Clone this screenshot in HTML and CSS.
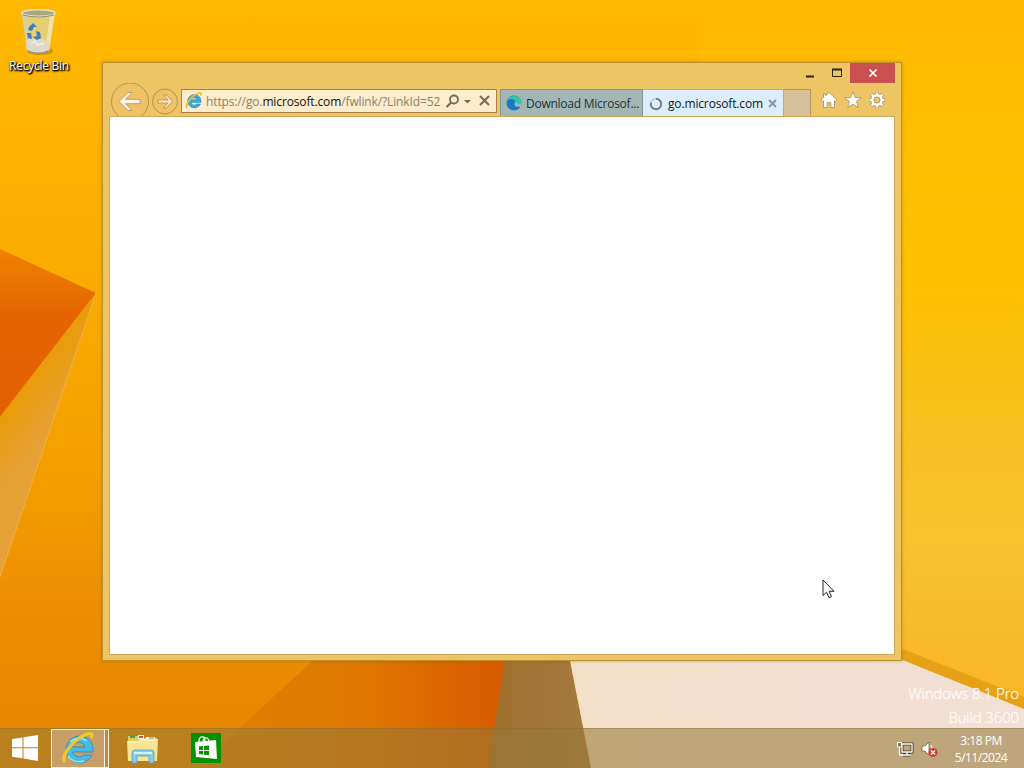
FILE: index.html
```html
<!DOCTYPE html>
<html lang="en">
<head>
  <meta charset="UTF-8">
  <meta name="viewport" content="width=device-width, initial-scale=1.0">
  <title>Desktop</title>
  <link rel="stylesheet" href="styles.css">
</head>
<body>
  <div class="desktop">
    <svg class="wallpaper" viewBox="0 0 1024 768" preserveAspectRatio="none">
      <defs>
        <linearGradient id="sky" x1="0" y1="0" x2="0" y2="1">
          <stop offset="0" stop-color="#ffb900"/>
          <stop offset=".38" stop-color="#fbab00"/>
          <stop offset=".6" stop-color="#f5a000"/>
          <stop offset=".8" stop-color="#ec8d00"/>
          <stop offset="1" stop-color="#e88600"/>
        </linearGradient>
        <linearGradient id="right" x1="0" y1="0" x2="0" y2="1">
          <stop offset="0" stop-color="#ffb900"/>
          <stop offset=".4" stop-color="#fcc100"/>
          <stop offset=".6" stop-color="#fac022"/>
          <stop offset=".75" stop-color="#fac22f"/>
          <stop offset="1" stop-color="#f7b424"/>
        </linearGradient>
        <linearGradient id="red" x1="0" y1="0" x2="0" y2="1">
          <stop offset="0" stop-color="#ef8200"/>
          <stop offset=".4" stop-color="#e56300"/>
          <stop offset="1" stop-color="#e26000"/>
        </linearGradient>
        <linearGradient id="blade" gradientUnits="userSpaceOnUse" x1="10" y1="390" x2="55" y2="425">
          <stop offset="0" stop-color="#ea9a00"/>
          <stop offset="1" stop-color="#e6a238"/>
        </linearGradient>
        <linearGradient id="fold" x1="0" y1="0" x2="1" y2="0">
          <stop offset="0" stop-color="#de8300"/>
          <stop offset=".55" stop-color="#df7600"/>
          <stop offset="1" stop-color="#d75a00"/>
        </linearGradient>
        <linearGradient id="brown" x1="0" y1="0" x2="1" y2="0">
          <stop offset="0" stop-color="#a06f2b"/>
          <stop offset="1" stop-color="#a57b42"/>
        </linearGradient>
        <linearGradient id="cream" x1="0" y1="0" x2="1" y2="0">
          <stop offset="0" stop-color="#f2e0c8"/>
          <stop offset="1" stop-color="#f2dfd6"/>
        </linearGradient>
      </defs>
      <rect width="1024" height="768" fill="url(#sky)"/>
      <rect x="700" width="324" height="720" fill="url(#right)"/>
      <path d="M0 249 96 293 0 417z" fill="url(#red)"/>
      <path d="M96 293 0 417V577z" fill="url(#blade)"/>
      <path d="M96 293 0 577" stroke="#eeb04a" stroke-width="1"/>
      <path d="M335 640H510L492 768H198L240 728z" fill="url(#fold)"/>
      <path d="M508 640H566L591 768H488z" fill="url(#brown)"/>
      <path d="M566 640H880L1024 709V768H591z" fill="url(#cream)"/>
      <path d="M890 644 1024 697V709L900 659z" fill="#e6a116"/>
    </svg>

    <div class="shortcut">
      <svg width="40" height="48" viewBox="0 0 40 48">
        <ellipse cx="21" cy="43" rx="13" ry="4" fill="#9c7100" opacity=".5"/>
        <path d="M3 5 8 43Q19 48 30 43L36 5z" fill="#e4d27d" opacity=".9"/>
        <path d="M3 5 8 43 11 44 8 7z" fill="#d1ceb2"/>
        <path d="M36 5 30 43 26 44 31 7z" fill="#eee2a9"/>
        <path d="M7 33Q12 28 17 32L24 31 31 35 30 43Q19 48 8 43z" fill="#ded9c9"/>
        <path d="M12 36 16 33 19 37 25 35" fill="none" stroke="#f1eee2" stroke-width="1.500"/>
        <path d="M8 42Q19 47 30 42L29 44Q19 48 9 44z" fill="#90928e"/>
        <ellipse cx="19.500" cy="5" rx="16.500" ry="3.300" fill="#aaa780" stroke="#e4e1d0" stroke-width="1.500"/>
        <path d="M4 7Q19 11 35 7" fill="none" stroke="#8f916c"/>
        <path d="M10 19 14 15 18 19 15 19 13 23 9 22zM17 23 21 24 22 30 18 32 14 29 18 28zM8 25 12 25 13 31 9 30z" fill="#3d7cc4"/>
      </svg>
      <span class="shortcut-label">Recycle Bin</span>
    </div>

    <div class="watermark">
      <div class="edition">Windows 8.1 Pro</div>
      <div class="build">Build 3600</div>
    </div>

    <div class="window">
      <div class="titlebar">
        <button class="caption"><svg width="10" height="12"><path d="M1 9.500H9" stroke="#2e220c" stroke-width="2"/></svg></button>
        <button class="caption"><svg width="12" height="12"><path d="M1.500 2.500H10.500V9.500H1.500z" fill="none" stroke="#2e220c"/><path d="M1 2.500H11" stroke="#2e220c" stroke-width="2"/></svg></button>
        <button class="caption close"><svg width="10" height="10"><path d="M1.500 1.500 8.500 8.500M8.500 1.500 1.500 8.500" stroke="#fff" stroke-width="1.700"/></svg></button>
      </div>
      <div class="toolbar">
        <div class="nav">
          <svg width="72" height="35" viewBox="0 0 72 35">
            <circle cx="20" cy="18.500" r="18.500" fill="#efc268" stroke="#b99148"/>
            <path d="M9 18.500 18 9.500H22L15.500 16.300H30V20.700H15.500L22 27.500H18z" fill="#fff6e5" stroke="#b58850" stroke-width=".8"/>
            <circle cx="55" cy="18.500" r="12.500" fill="#efc268" stroke="#b99148"/>
            <path d="M62.500 18.500 56.500 12H53.500L58 17H48V20H58L53.500 25H56.500z" fill="#fbe6bd" stroke="#b58850" stroke-width=".8"/>
          </svg>
        </div>
        <div class="address">
          <svg class="ie-small" width="18" height="18" viewBox="0 0 36 36">
            <path d="M18 5A13.500 13.500 0 1 0 31 24H23A6.500 6.500 0 0 1 12 21H32C33 11 27 5 18 5zM12 15.500A6.500 6.500 0 0 1 24 15.500z" fill="#3fa5dc" fill-rule="evenodd" stroke="#2788bd"/>
            <path d="M4 32C-1 25 16 5 28 2Q34 1 31 7" fill="none" stroke="#e3c02e" stroke-width="3.500"/>
          </svg>
          <span class="url">https://go.<b>microsoft.com</b>/fwlink/?LinkId=52</span>
          <svg class="address-icons" width="48" height="18" viewBox="0 0 48 18">
            <circle cx="10" cy="7.500" r="4" fill="none" stroke="#776a54" stroke-width="1.800"/>
            <path d="M7.200 10.500 2.500 15" stroke="#776a54" stroke-width="2.200"/>
            <path d="M20 8H27L23.500 11.500z" fill="#776a54"/>
            <path d="M36 4 45 13M45 4 36 13" stroke="#776a54" stroke-width="2"/>
          </svg>
        </div>
        <div class="tabs">
          <div class="tab">
            <svg width="16" height="16" viewBox="0 0 16 16">
              <circle cx="8" cy="8" r="7.500" fill="#1b78c8"/>
              <path d="M1 6C3 0 12-1 15 5 16 9 13 11 10 9.500 11 5 5 3 1 6z" fill="#35c6a6"/>
              <path d="M1 6C5 2 10 5 8 8 6 12 11 13 14 12 9 18 0 14 1 6z" fill="#147bc9"/>
              <path d="M9.500 6.500Q7 10 10 11.500L16 12V8Q12 10 9.500 6.500z" fill="#a2b7b4"/>
            </svg>
            <span>Download Microsof...</span>
          </div>
          <div class="tab active">
            <svg width="14" height="14" viewBox="0 0 14 14"><path d="M7 1.800A5.200 5.200 0 1 1 2 5.500" fill="none" stroke="#727e88" stroke-width="2"/><path d="M2 5.500A5.200 5.200 0 0 1 7 1.800" fill="none" stroke="#c2d2dc" stroke-width="2"/></svg>
            <span>go.microsoft.com</span>
            <svg class="tab-close" width="9" height="9"><path d="M1 1 8 8M8 1 1 8" stroke="#8296a2" stroke-width="1.800"/></svg>
          </div>
          <div class="new-tab"></div>
        </div>
        <div class="tools">
          <svg width="18" height="18" viewBox="0 0 18 18"><path d="M9 1.500 17 9 15.500 10.500 14.500 9.600V16.500H10.800V11.500H7.200V16.500H3.500V9.600L2.500 10.500 1 9 3.500 6.700V3H5.500V4.700z" fill="#fff" stroke="#a88b5e" stroke-width=".8"/></svg>
          <svg width="18" height="18" viewBox="0 0 18 18"><path d="M9 .8 11.200 6.500 17.300 6.800 12.600 10.600 14.200 16.600 9 13.200 3.800 16.600 5.400 10.600 .7 6.800 6.800 6.500z" fill="#fff" stroke="#a88b5e" stroke-width=".8"/></svg>
          <svg width="18" height="18" viewBox="0 0 18 18">
            <path d="M9 1V17M1 9H17M3.300 3.300 14.700 14.700M14.700 3.300 3.300 14.700" stroke="#a88b5e" stroke-width="4"/>
            <path d="M9 1.500V16.500M1.500 9H16.500M3.700 3.700 14.300 14.300M14.300 3.700 3.700 14.300" stroke="#fff" stroke-width="2.600"/>
            <circle cx="9" cy="9" r="4.500" fill="#e9bd62" stroke="#fff" stroke-width="2.500"/>
            <circle cx="9" cy="9" r="3" fill="#edc466" stroke="#a88b5e" stroke-width=".8"/>
          </svg>
        </div>
      </div>
      <div class="page"></div>
    </div>

    <svg class="cursor" width="13" height="20" viewBox="0 0 13 20"><path d="M1 1V16.500L4.500 13.200 7 18.700 9.500 17.600 7.200 12.300H12z" fill="#fff" stroke="#222"/></svg>

    <div class="taskbar">
      <div class="task start">
        <svg width="28" height="26" viewBox="0 0 28 26"><path d="M1 4 11.500 2.500V12.300H1zM12.500 2.300 27 0V12.300H12.500zM1 13.300H11.500V23.300L1 21.800zM12.500 13.300H27V26L12.500 23.500z" fill="#fff"/></svg>
      </div>
      <div class="task running">
        <svg width="36" height="36" viewBox="0 0 36 36">
          <path d="M18.500 5A13.500 13.500 0 1 0 32 24H24A7 7 0 0 1 12.500 21H33C34 11 28 5 18.500 5zM12.500 16A6.500 6.500 0 0 1 25 16z" fill="#45bce8" fill-rule="evenodd" stroke="#2589b8" stroke-width=".8"/>
          <path d="M10 11Q18 4 27 10M8 25Q14 33 24 30" fill="none" stroke="#9be3f7" stroke-width="1.500"/>
          <path d="M5 31C-1 25 17 5 29 2.500Q34 2 31 7" fill="none" stroke="#f4c829" stroke-width="3"/>
        </svg>
      </div>
      <div class="task explorer">
        <svg width="34" height="30" viewBox="0 0 34 30">
          <path d="M2 2H13L15 4H31V26H2z" fill="#e7c75d"/>
          <path d="M4 1H9V4H4z" fill="#38a65b"/><path d="M12 1H18V5H12z" fill="#f6efe0"/><path d="M13 2H17V4H13z" fill="#d3543d"/><path d="M20 3H29V6H20z" fill="#f8f3d9"/><path d="M23 4H28" stroke="#4e9da0"/>
          <path d="M1 7H12L14 5H32L31 27H2z" fill="#f8e493"/>
          <path d="M2 8H13L15 6H31" fill="none" stroke="#fff5c5"/>
          <path d="M6 29V19Q6 16 9 16H25Q28 16 28 19V29H23V22H11V29z" fill="#8acbe5" stroke="#559ec2" stroke-width=".8"/>
          <path d="M8 19H26" stroke="#d5f2fa" stroke-width="2"/>
        </svg>
      </div>
      <div class="task store">
        <svg width="30" height="30" viewBox="0 0 30 30">
          <path d="M0 0H30V30H0z" fill="#069000"/>
          <path d="M4 9 25 7 26 26 5 24z" fill="#fff"/>
          <path d="M8 10V7Q9 3 12 4 14 4 14 9M12 8Q13 4 16 5 18 6 18 9" fill="none" stroke="#fff" stroke-width="1.300"/>
          <path d="M8 13.500 12 13V17H8zM13 13 18 12.500V17H13zM8 18H12V21.500L8 21zM13 18H18V22.300L13 21.700z" fill="#069000"/>
        </svg>
      </div>
      <div class="tray">
        <svg width="18" height="16" viewBox="0 0 18 16">
          <path d="M6 3H16V11H6zM11 11V14M7 14H15" fill="none" stroke="#4a3c24" stroke-width="3"/>
          <path d="M6 3H16V11H6zM11 11V14M7 14H15M3.500 6V14H7" fill="none" stroke="#fff" stroke-width="1.300"/>
          <path d="M1.500 1.500H5.500V6H1.500z" fill="#8a754f" stroke="#fff"/>
        </svg>
        <svg width="18" height="18" viewBox="0 0 18 18">
          <path d="M2 6H5L9 2V15L5 11H2z" fill="#fff" stroke="#685336" stroke-width=".7"/>
          <path d="M11 5Q13 8 11 11" fill="none" stroke="#fff"/>
          <circle cx="13" cy="12.500" r="4.500" fill="#cf3e35"/>
          <path d="M11 10.500 15 14.500M15 10.500 11 14.500" stroke="#fff" stroke-width="1.400"/>
        </svg>
      </div>
      <div class="clock">
        <div class="time">3:18 PM</div>
        <div class="date">5/11/2024</div>
      </div>
    </div>
  </div>
</body>
</html>
```

FILE: styles.css
```css
* {
  box-sizing: border-box;
}
body {
  margin: 0;
  font-family: "Open Sans", "Noto Sans", sans-serif;
  font-size: 12px;
}
svg {
  display: block;
  flex: none;
}
.desktop {
  position: relative;
  display: flex;
  flex-direction: column;
  width: 1024px;
  height: 768px;
  overflow: hidden;
}
.wallpaper {
  position: absolute;
  width: 1024px;
  height: 768px;
}
.shortcut {
  position: relative;
  width: 78px;
  padding-top: 8px;
  display: flex;
  flex-direction: column;
  align-items: center;
}
.shortcut-label {
  margin-top: 2px;
  line-height: 16px;
  letter-spacing: -0.25px;
  color: #fff;
  white-space: nowrap;
  text-shadow: 1px 1px 2px #000, 0 1px 2px #000, 1px 1px 1px #000;
}
.window {
  position: absolute;
  left: 102px;
  top: 62px;
  width: 800px;
  height: 599px;
  padding: 0 6px 5px;
  display: flex;
  flex-direction: column;
  background: #edc565;
  border: 1px solid #bd912f;
  box-shadow: 0 0 3px rgba(120, 80, 0, 0.4);
}
.titlebar {
  display: flex;
  justify-content: flex-end;
  height: 20px;
}
.caption {
  display: flex;
  justify-content: center;
  align-items: center;
  width: 27px;
  height: 20px;
  padding: 0;
  border: none;
  background: none;
}
.close {
  width: 45px;
  background: #c9504e;
}
.toolbar {
  display: flex;
  height: 33px;
  padding-left: 1px;
}
.nav {
  width: 71px;
}
.address {
  display: flex;
  align-items: center;
  width: 316px;
  height: 24px;
  margin-top: 6px;
  padding-left: 3px;
  background: #fdedcc;
  border: 1px solid #a88343;
}
.url {
  width: 237px;
  margin-left: 3px;
  overflow: hidden;
  white-space: nowrap;
  letter-spacing: -0.13px;
  color: #8d8069;
}
.url b {
  font-weight: normal;
  color: #16120b;
}
.address-icons {
  margin-left: 1px;
}
.tabs {
  display: flex;
  height: 28px;
  margin: 6px 0 0 3px;
}
.tab {
  display: flex;
  align-items: center;
  width: 143px;
  padding-left: 5px;
  white-space: nowrap;
  letter-spacing: -0.25px;
  color: #24323a;
  background: #a2b7b4;
  border: 1px solid #829693;
}
.tab span {
  margin-left: 4px;
}
.active {
  width: 141px;
  letter-spacing: -0.15px;
  color: #101a22;
  background: #dceefb;
  border-color: #9eafba;
  border-left: none;
  border-bottom: none;
  padding-left: 6px;
}
.active span {
  margin-left: 5px;
}
.tab .tab-close {
  margin-left: 5px;
}
.new-tab {
  width: 27px;
  background: #d7c19b;
  border: 1px solid #b19865;
  border-left: none;
}
.tools {
  display: flex;
  gap: 6px;
  margin: 8px 0 0 9px;
}
.page {
  flex: 1;
  background: #fff;
  border: 1px solid #d5a75a;
}
.cursor {
  position: absolute;
  left: 822px;
  top: 579px;
}
.watermark {
  position: absolute;
  right: 5px;
  top: 681px;
  text-align: right;
  font-size: 15px;
  line-height: 24px;
  font-weight: 300;
  letter-spacing: -0.15px;
  color: #fff;
  text-shadow: 0 0 1px rgba(255, 255, 255, 0.6);
}
.taskbar {
  position: relative;
  display: flex;
  height: 40px;
  margin-top: auto;
  background: rgba(149, 122, 55, 0.56);
  border-top: 1px solid rgba(135, 105, 45, 0.4);
}
.task {
  display: flex;
  justify-content: center;
  align-items: center;
}
.start {
  width: 50px;
  padding-bottom: 2px;
}
.running {
  width: 58px;
  margin-left: 1px;
  padding-right: 5px;
  background: linear-gradient(90deg, #c79e68 52px, #fff1d8 52px, #fff1d8 53px, #bd8847 53px);
  border: 1px solid #fff1d8;
}
.explorer {
  width: 68px;
}
.store {
  width: 58px;
  padding-bottom: 2px;
}
.tray {
  display: flex;
  align-items: center;
  gap: 6px;
  margin-left: auto;
}
.clock {
  width: 86px;
  padding-top: 3px;
  text-align: center;
  line-height: 17px;
  letter-spacing: -0.5px;
  color: #fff;
}
```
